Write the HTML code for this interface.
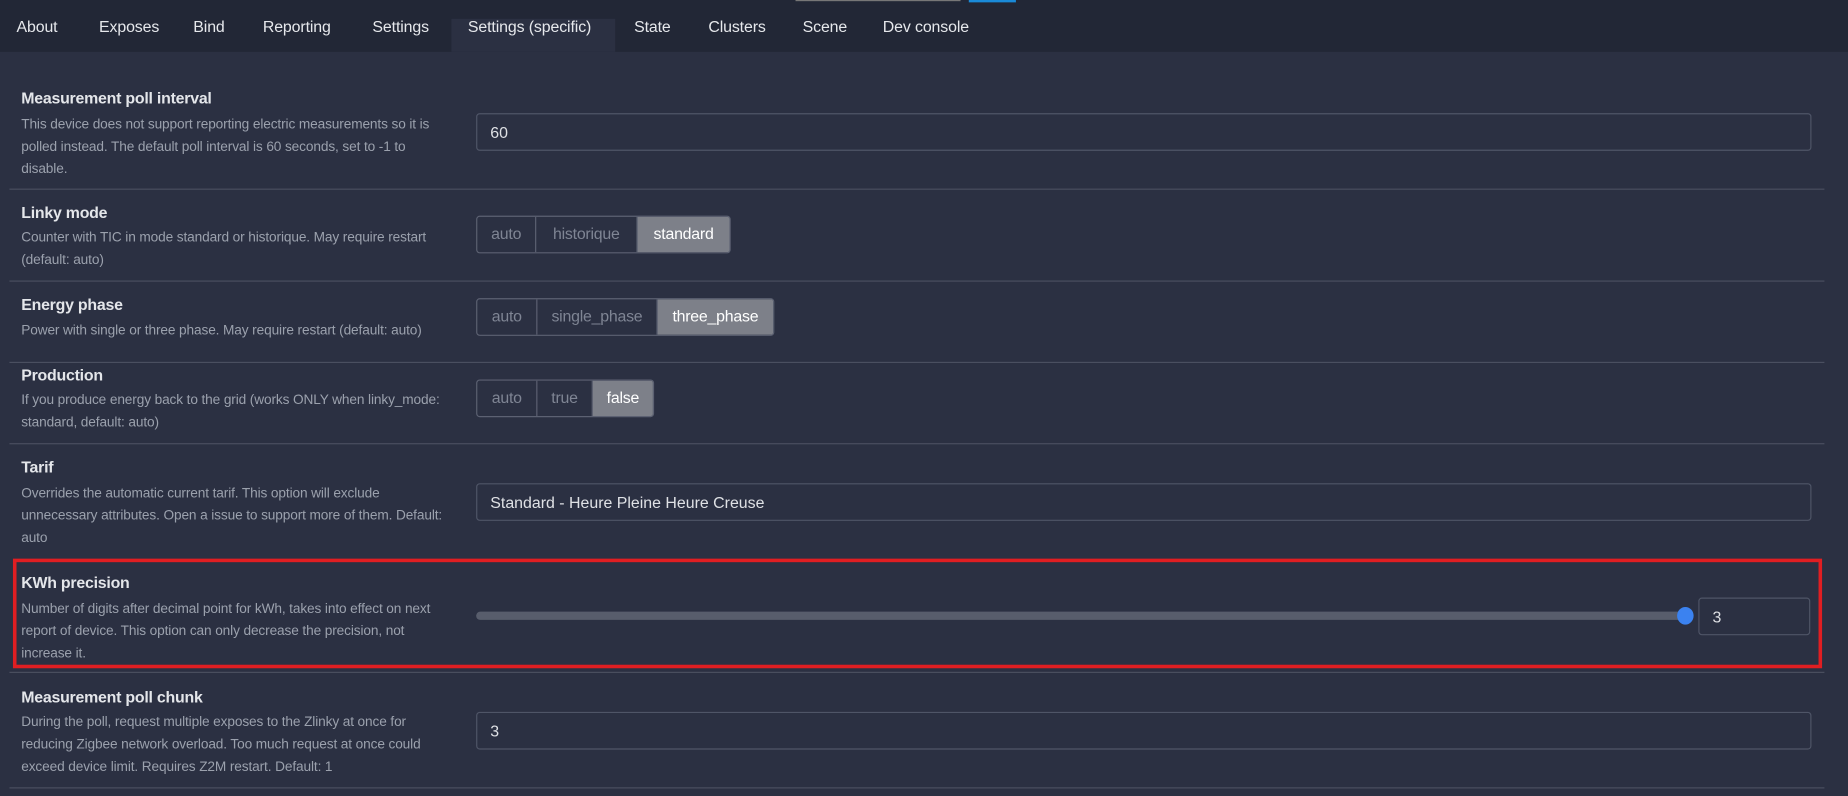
<!DOCTYPE html>
<html><head><meta charset="utf-8"><style>
html,body{margin:0;padding:0;background:#2b3042;width:1848px;height:796px;overflow:hidden}
#w{position:absolute;left:0;top:0;width:1568px;height:675px;transform:scale(1.178571);transform-origin:0 0;font-family:"Liberation Sans",sans-serif;color:#e2e4e8}
.nav{position:absolute;left:0;top:0;width:1568px;height:44px;background:#222736}
.tab{position:absolute;top:15px;font-size:13.5px;color:#e6e8ec;letter-spacing:-0.1px}
.act{position:absolute;left:383px;top:16px;width:139px;height:28px;background:#2b3042}
.sep{position:absolute;left:8px;width:1540px;height:1px;background:#4a4f60}
.t{position:absolute;left:18px;font-size:13.5px;font-weight:bold;color:#e4e6ea;letter-spacing:-0.2px}
.d{position:absolute;left:18px;white-space:nowrap;font-size:11.6px;line-height:19px;color:#9ba1ad;letter-spacing:-0.1px}
.in{position:absolute;left:404px;height:30px;border:1px solid #4f5567;border-radius:3px;box-sizing:border-box;font-size:13.5px;color:#dfe1e5;padding:8px 0 0 11px;width:1133px}
.bg{position:absolute;left:404px;display:flex;height:32px;border:1px solid #5c6172;border-radius:3px;box-sizing:border-box;overflow:hidden}
.bg span{display:block;box-sizing:border-box;text-align:center;font-size:13.5px;line-height:30px;color:#7f8594;border-right:1px solid #5c6172;letter-spacing:-0.2px}
.bg span.on{background:#7d8089;color:#fff;border-right:none}
</style></head><body><div id="w">
<div class="nav"></div>
<div style="position:absolute;left:675px;top:0;width:140px;height:1px;background:#777"></div>
<div style="position:absolute;left:822px;top:0;width:40px;height:2px;background:#1a8ad8"></div>
<div class="act"></div>
<div class="tab" style="left:14px">About</div>
<div class="tab" style="left:84px">Exposes</div>
<div class="tab" style="left:164px">Bind</div>
<div class="tab" style="left:223px">Reporting</div>
<div class="tab" style="left:316px">Settings</div>
<div class="tab" style="left:397px">Settings (specific)</div>
<div class="tab" style="left:538px">State</div>
<div class="tab" style="left:601px">Clusters</div>
<div class="tab" style="left:681px">Scene</div>
<div class="tab" style="left:749px">Dev console</div>

<div class="t" style="top:76px">Measurement poll interval</div>
<div class="d" style="top:96px">This device does not support reporting electric measurements so it is<br>polled instead. The default poll interval is 60 seconds, set to -1 to<br>disable.</div>
<div class="in" style="top:96px;height:32px">60</div>
<div class="sep" style="top:160px"></div>

<div class="t" style="top:173px">Linky mode</div>
<div class="d" style="top:192px">Counter with TIC in mode standard or historique. May require restart<br>(default: auto)</div>
<div class="bg" style="top:183px"><span style="width:50px">auto</span><span style="width:86px">historique</span><span class="on" style="width:78px">standard</span></div>
<div class="sep" style="top:238px"></div>

<div class="t" style="top:251px">Energy phase</div>
<div class="d" style="top:271px">Power with single or three phase. May require restart (default: auto)</div>
<div class="bg" style="top:253px"><span style="width:51px">auto</span><span style="width:102px">single_phase</span><span class="on" style="width:98px">three_phase</span></div>
<div class="sep" style="top:307px"></div>

<div class="t" style="top:311px">Production</div>
<div class="d" style="top:330px">If you produce energy back to the grid (works ONLY when linky_mode:<br>standard, default: auto)</div>
<div class="bg" style="top:322px"><span style="width:51px">auto</span><span style="width:47px">true</span><span class="on" style="width:51px">false</span></div>
<div class="sep" style="top:376px"></div>

<div class="t" style="top:389px">Tarif</div>
<div class="d" style="top:409px">Overrides the automatic current tarif. This option will exclude<br>unnecessary attributes. Open a issue to support more of them. Default:<br>auto</div>
<div class="in" style="top:410px;height:32px">Standard - Heure Pleine Heure Creuse</div>

<div style="position:absolute;left:11px;top:474px;width:1535px;height:93px;border:3px solid #e01e22;box-sizing:border-box"></div>
<div class="t" style="top:487px">KWh precision</div>
<div class="d" style="top:507px">Number of digits after decimal point for kWh, takes into effect on next<br>report of device. This option can only decrease the precision, not<br>increase it.</div>
<div style="position:absolute;left:404px;top:519px;width:1028px;height:7px;border-radius:4px;background:#585d6c"></div>
<div style="position:absolute;left:1423px;top:515px;width:14px;height:15px;border-radius:50%;background:#3b82f0"></div>
<div class="in" style="top:507px;left:1441px;width:95px;height:32px">3</div>
<div class="sep" style="top:570px"></div>

<div class="t" style="top:584px">Measurement poll chunk</div>
<div class="d" style="top:603px">During the poll, request multiple exposes to the Zlinky at once for<br>reducing Zigbee network overload. Too much request at once could<br>exceed device limit. Requires Z2M restart. Default: 1</div>
<div class="in" style="top:604px;height:32px">3</div>
<div class="sep" style="top:668px"></div>
</div></body></html>
